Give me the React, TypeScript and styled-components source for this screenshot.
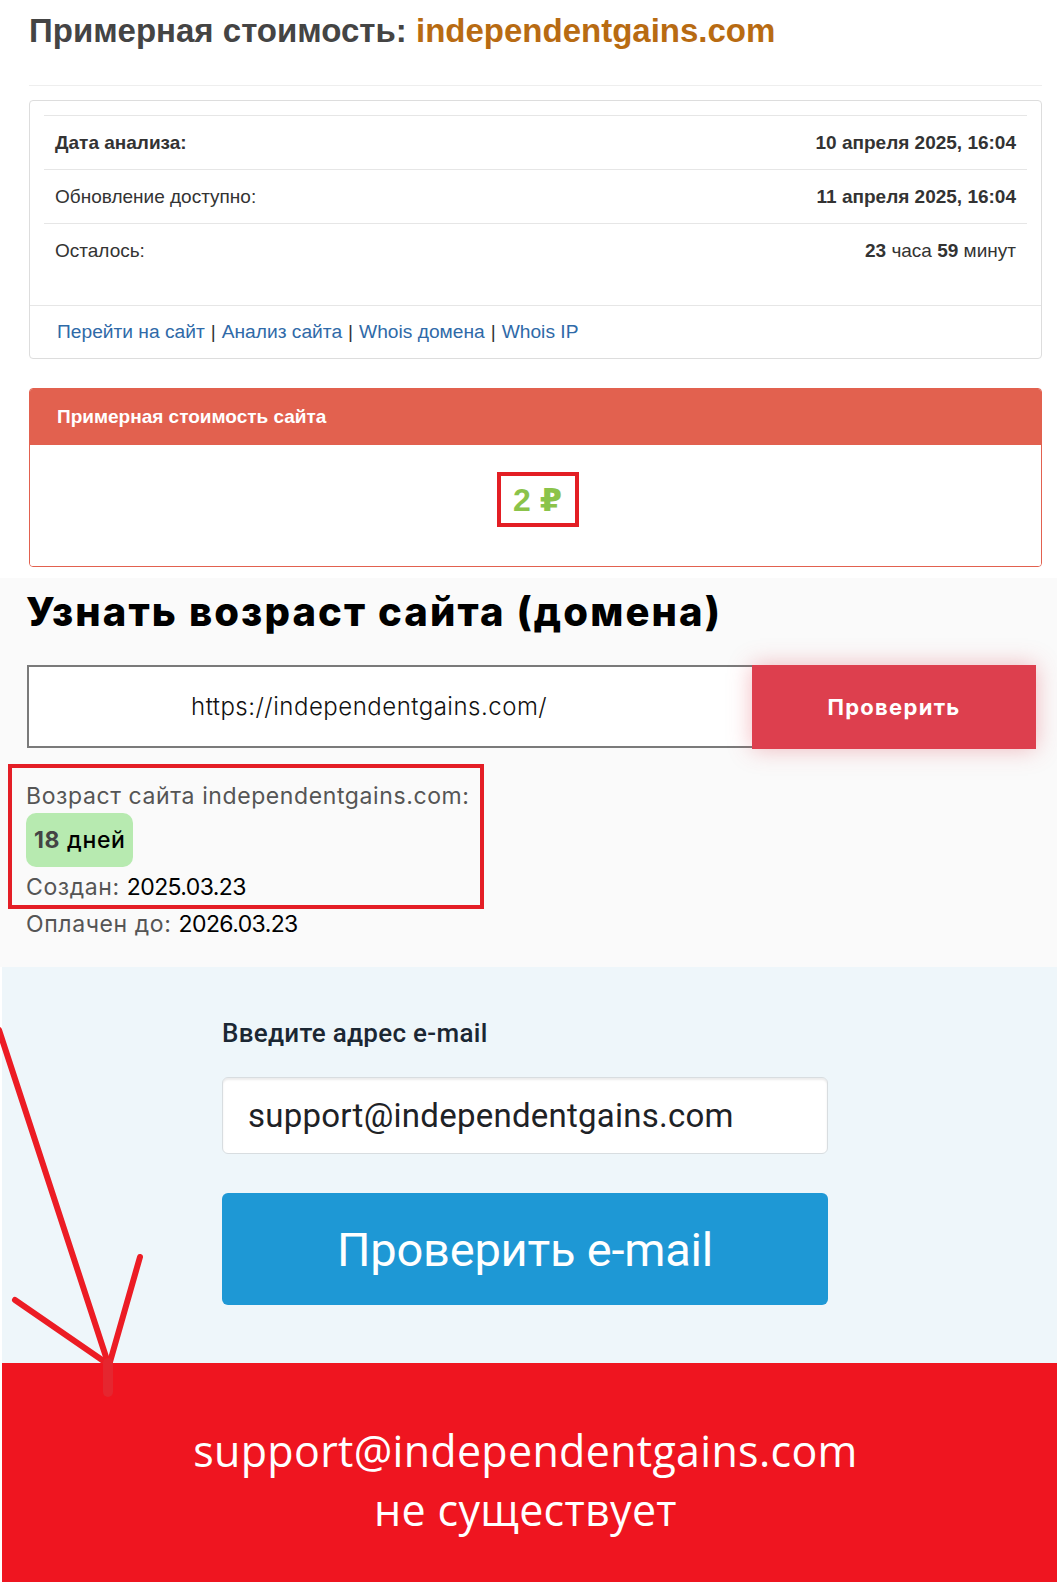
import React from "react";
import styled, { createGlobalStyle } from "styled-components";

const Global = createGlobalStyle`
  html, body { margin: 0; padding: 0; background: #ffffff; }
  * { box-sizing: border-box; }
`;

const Page = styled.div`
  position: relative;
  width: 1057px;
  overflow: hidden;
`;

/* ---------- Section 1 ---------- */
const ValueSection = styled.section`
  background: #ffffff;
  padding: 13px 15px 11px 29px;
  font-family: "Liberation Sans", Arial, sans-serif;
  color: #333333;
`;

const Title = styled.h1`
  margin: 0;
  font-size: 33px;
  line-height: 36px;
  font-weight: 700;
  color: #444444;
`;

const Domain = styled.span`
  color: #b86b12;
`;

const Rule = styled.hr`
  margin: 36px 0 14px;
  border: 0;
  border-top: 1px solid #eeeeee;
  height: 0;
`;

const Card = styled.div`
  border: 1px solid #dddddd;
  border-radius: 4px;
  background: #ffffff;
`;

const CardBody = styled.div`
  padding: 14px;
`;

const InfoTable = styled.div`
  display: flex;
  flex-direction: column;
  margin-bottom: 14px;
`;

const InfoRow = styled.div`
  display: flex;
  align-items: center;
  justify-content: space-between;
  height: 54px;
  padding: 0 11px;
  border-top: 1px solid #e6e6e6;
  font-size: 19px;
`;

const Label = styled.span<{ $bold?: boolean }>`
  font-weight: ${(p) => (p.$bold ? 700 : 400)};
`;

const Value = styled.span`
  text-align: right;
`;

const Strong = styled.b`
  font-weight: 700;
`;

const CardFooter = styled.div`
  display: flex;
  align-items: center;
  height: 53px;
  padding: 0 27px;
  border-top: 1px solid #e6e6e6;
  font-size: 19.2px;
  color: #333333;
`;

const Link = styled.a`
  color: #2f6aa8;
  text-decoration: none;
`;

const Sep = styled.span`
  margin: 0 6px;
`;

const PricePanel = styled.div`
  margin-top: 29px;
  border: 1px solid #e2614f;
  border-radius: 4px;
  overflow: hidden;
`;

const PriceHeader = styled.div`
  height: 56px;
  display: flex;
  align-items: center;
  padding: 0 27px;
  background: #e2614f;
  color: #ffffff;
  font-size: 19px;
  font-weight: 700;
`;

const PriceBody = styled.div`
  display: flex;
  justify-content: center;
  padding: 27px 0 39px;
  background: #ffffff;
`;

const PriceMark = styled.span`
  display: inline-flex;
  align-items: center;
  justify-content: center;
  width: 82px;
  height: 55px;
  margin-left: 4px;
  border: 4px solid #e31e24;
  color: #8bc34a;
  font-size: 32px;
  font-weight: 700;
  font-family: "Liberation Sans", "DejaVu Sans", sans-serif;
`;

/* ---------- Section 2 ---------- */
const AgeSection = styled.section`
  background: #fafafa;
  padding: 11px 21px 28px 8px;
  font-family: Inter, "Noto Sans", sans-serif;
  color: #000000;
`;

const AgeTitle = styled.h2`
  margin: 0 0 0 18px;
  font-size: 40px;
  line-height: 46px;
  font-weight: 800;
  letter-spacing: 2.1px;
  color: #000000;
`;

const CheckForm = styled.div`
  display: flex;
  margin: 30px 0 0 19px;
`;

const UrlInput = styled.div`
  flex: 1;
  height: 83px;
  display: flex;
  align-items: center;
  padding-left: 162px;
  background: #ffffff;
  border: 2px solid #7a7a7a;
  border-right: 0;
  font-size: 24px;
  font-weight: 300;
  letter-spacing: 0.5px;
  color: #111111;
`;

const RedButton = styled.button`
  width: 284px;
  height: 84px;
  border: 0;
  background: #dd3f4e;
  color: #ffffff;
  font-family: Inter, "Noto Sans", sans-serif;
  font-size: 22px;
  font-weight: 700;
  letter-spacing: 1.3px;
  box-shadow: 0 0 22px rgba(221, 63, 78, 0.35);
`;

const ResultBox = styled.div`
  display: inline-flex;
  flex-direction: column;
  align-items: flex-start;
  margin-top: 15px;
  padding: 13px 10px 3px 14px;
  border: 4px solid #e41e26;
`;

const InfoLine = styled.div<{ $indent?: boolean }>`
  font-size: 23px;
  line-height: 30px;
  letter-spacing: 0.6px;
  color: #555555;
  margin-left: ${(p) => (p.$indent ? "18px" : "0")};
`;

const Dark = styled.span`
  color: #000000;
  letter-spacing: -0.6px;
`;

const Badge = styled.span`
  display: inline-flex;
  align-items: center;
  height: 54px;
  margin: 2px 0 5px;
  padding: 0 8px;
  border-radius: 10px;
  background: #b7eab0;
  font-size: 23px;
  font-weight: 500;
  letter-spacing: 0.6px;
  color: #000000;
`;

const BadgeNum = styled.b`
  font-weight: 700;
  color: #444444;
  margin-right: 7px;
`;

/* ---------- Section 3 ---------- */
const EmailSection = styled.section`
  margin-left: 2px;
  background: #eef6fa;
  padding: 51px 0 58px 220px;
  font-family: Roboto, "Noto Sans", sans-serif;
`;

const EmailColumn = styled.div`
  width: 606px;
  display: flex;
  flex-direction: column;
`;

const EmailLabel = styled.label`
  font-size: 26px;
  line-height: 30px;
  font-weight: 500;
  letter-spacing: 0.3px;
  color: #1b2733;
`;

const EmailInput = styled.div`
  margin-top: 29px;
  height: 77px;
  display: flex;
  align-items: center;
  padding-left: 25px;
  background: #ffffff;
  border: 1px solid #d8dde0;
  border-radius: 6px;
  box-shadow: inset 0 2px 2px rgba(0, 0, 0, 0.08);
  font-size: 33px;
  letter-spacing: 0.25px;
  color: #1e2226;
`;

const BlueButton = styled.button`
  margin-top: 39px;
  height: 112px;
  border: 0;
  border-radius: 6px;
  background: #1e98d5;
  color: #ffffff;
  font-family: Roboto, "Noto Sans", sans-serif;
  font-size: 47px;
  font-weight: 400;
  letter-spacing: -0.2px;
`;

/* ---------- Section 4 ---------- */
const Verdict = styled.section`
  margin-left: 2px;
  height: 220px;
  background: #ef1520;
  padding: 58px 8px 0 0;
  font-family: "Open Sans", "Noto Sans", sans-serif;
  font-size: 43px;
  line-height: 59px;
  letter-spacing: 0.3px;
  color: #ffffff;
  text-align: center;
`;

/* ---------- Overlay arrow ---------- */
const Arrow = styled.svg`
  position: absolute;
  left: 0;
  top: 1020px;
  pointer-events: none;
`;

export default function App() {
  return (
    <Page>
      <Global />
      <ValueSection>
        <Title>
          Примерная стоимость: <Domain>independentgains.com</Domain>
        </Title>
        <Rule />
        <Card>
          <CardBody>
            <InfoTable>
              <InfoRow>
                <Label $bold>Дата анализа:</Label>
                <Value>
                  <Strong>10 апреля 2025, 16:04</Strong>
                </Value>
              </InfoRow>
              <InfoRow>
                <Label>Обновление доступно:</Label>
                <Value>
                  <Strong>11 апреля 2025, 16:04</Strong>
                </Value>
              </InfoRow>
              <InfoRow>
                <Label>Осталось:</Label>
                <Value>
                  <Strong>23</Strong> часа <Strong>59</Strong> минут
                </Value>
              </InfoRow>
            </InfoTable>
          </CardBody>
          <CardFooter>
            <Link href="#">Перейти на сайт</Link>
            <Sep>|</Sep>
            <Link href="#">Анализ сайта</Link>
            <Sep>|</Sep>
            <Link href="#">Whois домена</Link>
            <Sep>|</Sep>
            <Link href="#">Whois IP</Link>
          </CardFooter>
        </Card>
        <PricePanel>
          <PriceHeader>Примерная стоимость сайта</PriceHeader>
          <PriceBody>
            <PriceMark>2 ₽</PriceMark>
          </PriceBody>
        </PricePanel>
      </ValueSection>

      <AgeSection>
        <AgeTitle>Узнать возраст сайта (домена)</AgeTitle>
        <CheckForm>
          <UrlInput>https://independentgains.com/</UrlInput>
          <RedButton>Проверить</RedButton>
        </CheckForm>
        <ResultBox>
          <InfoLine>Возраст сайта independentgains.com:</InfoLine>
          <Badge>
            <BadgeNum>18</BadgeNum>дней
          </Badge>
          <InfoLine>
            Создан: <Dark>2025.03.23</Dark>
          </InfoLine>
        </ResultBox>
        <InfoLine $indent>
          Оплачен до: <Dark>2026.03.23</Dark>
        </InfoLine>
      </AgeSection>

      <EmailSection>
        <EmailColumn>
          <EmailLabel>Введите адрес e-mail</EmailLabel>
          <EmailInput>support@independentgains.com</EmailInput>
          <BlueButton>Проверить e-mail</BlueButton>
        </EmailColumn>
      </EmailSection>

      <Verdict>
        support@independentgains.com
        <br />
        не существует
      </Verdict>

      <Arrow width="150" height="380" viewBox="0 0 150 380">
        <g stroke="#ec1c24" strokeWidth="6" strokeLinecap="round" fill="none">
          <line x1="-1" y1="10" x2="108" y2="343" />
          <line x1="15" y1="280" x2="105" y2="342" />
          <line x1="140" y1="237" x2="110" y2="342" />
        </g>
        <line x1="108" y1="343" x2="108" y2="372" stroke="#e5262f" strokeWidth="10" strokeLinecap="round" />
      </Arrow>
    </Page>
  );
}
